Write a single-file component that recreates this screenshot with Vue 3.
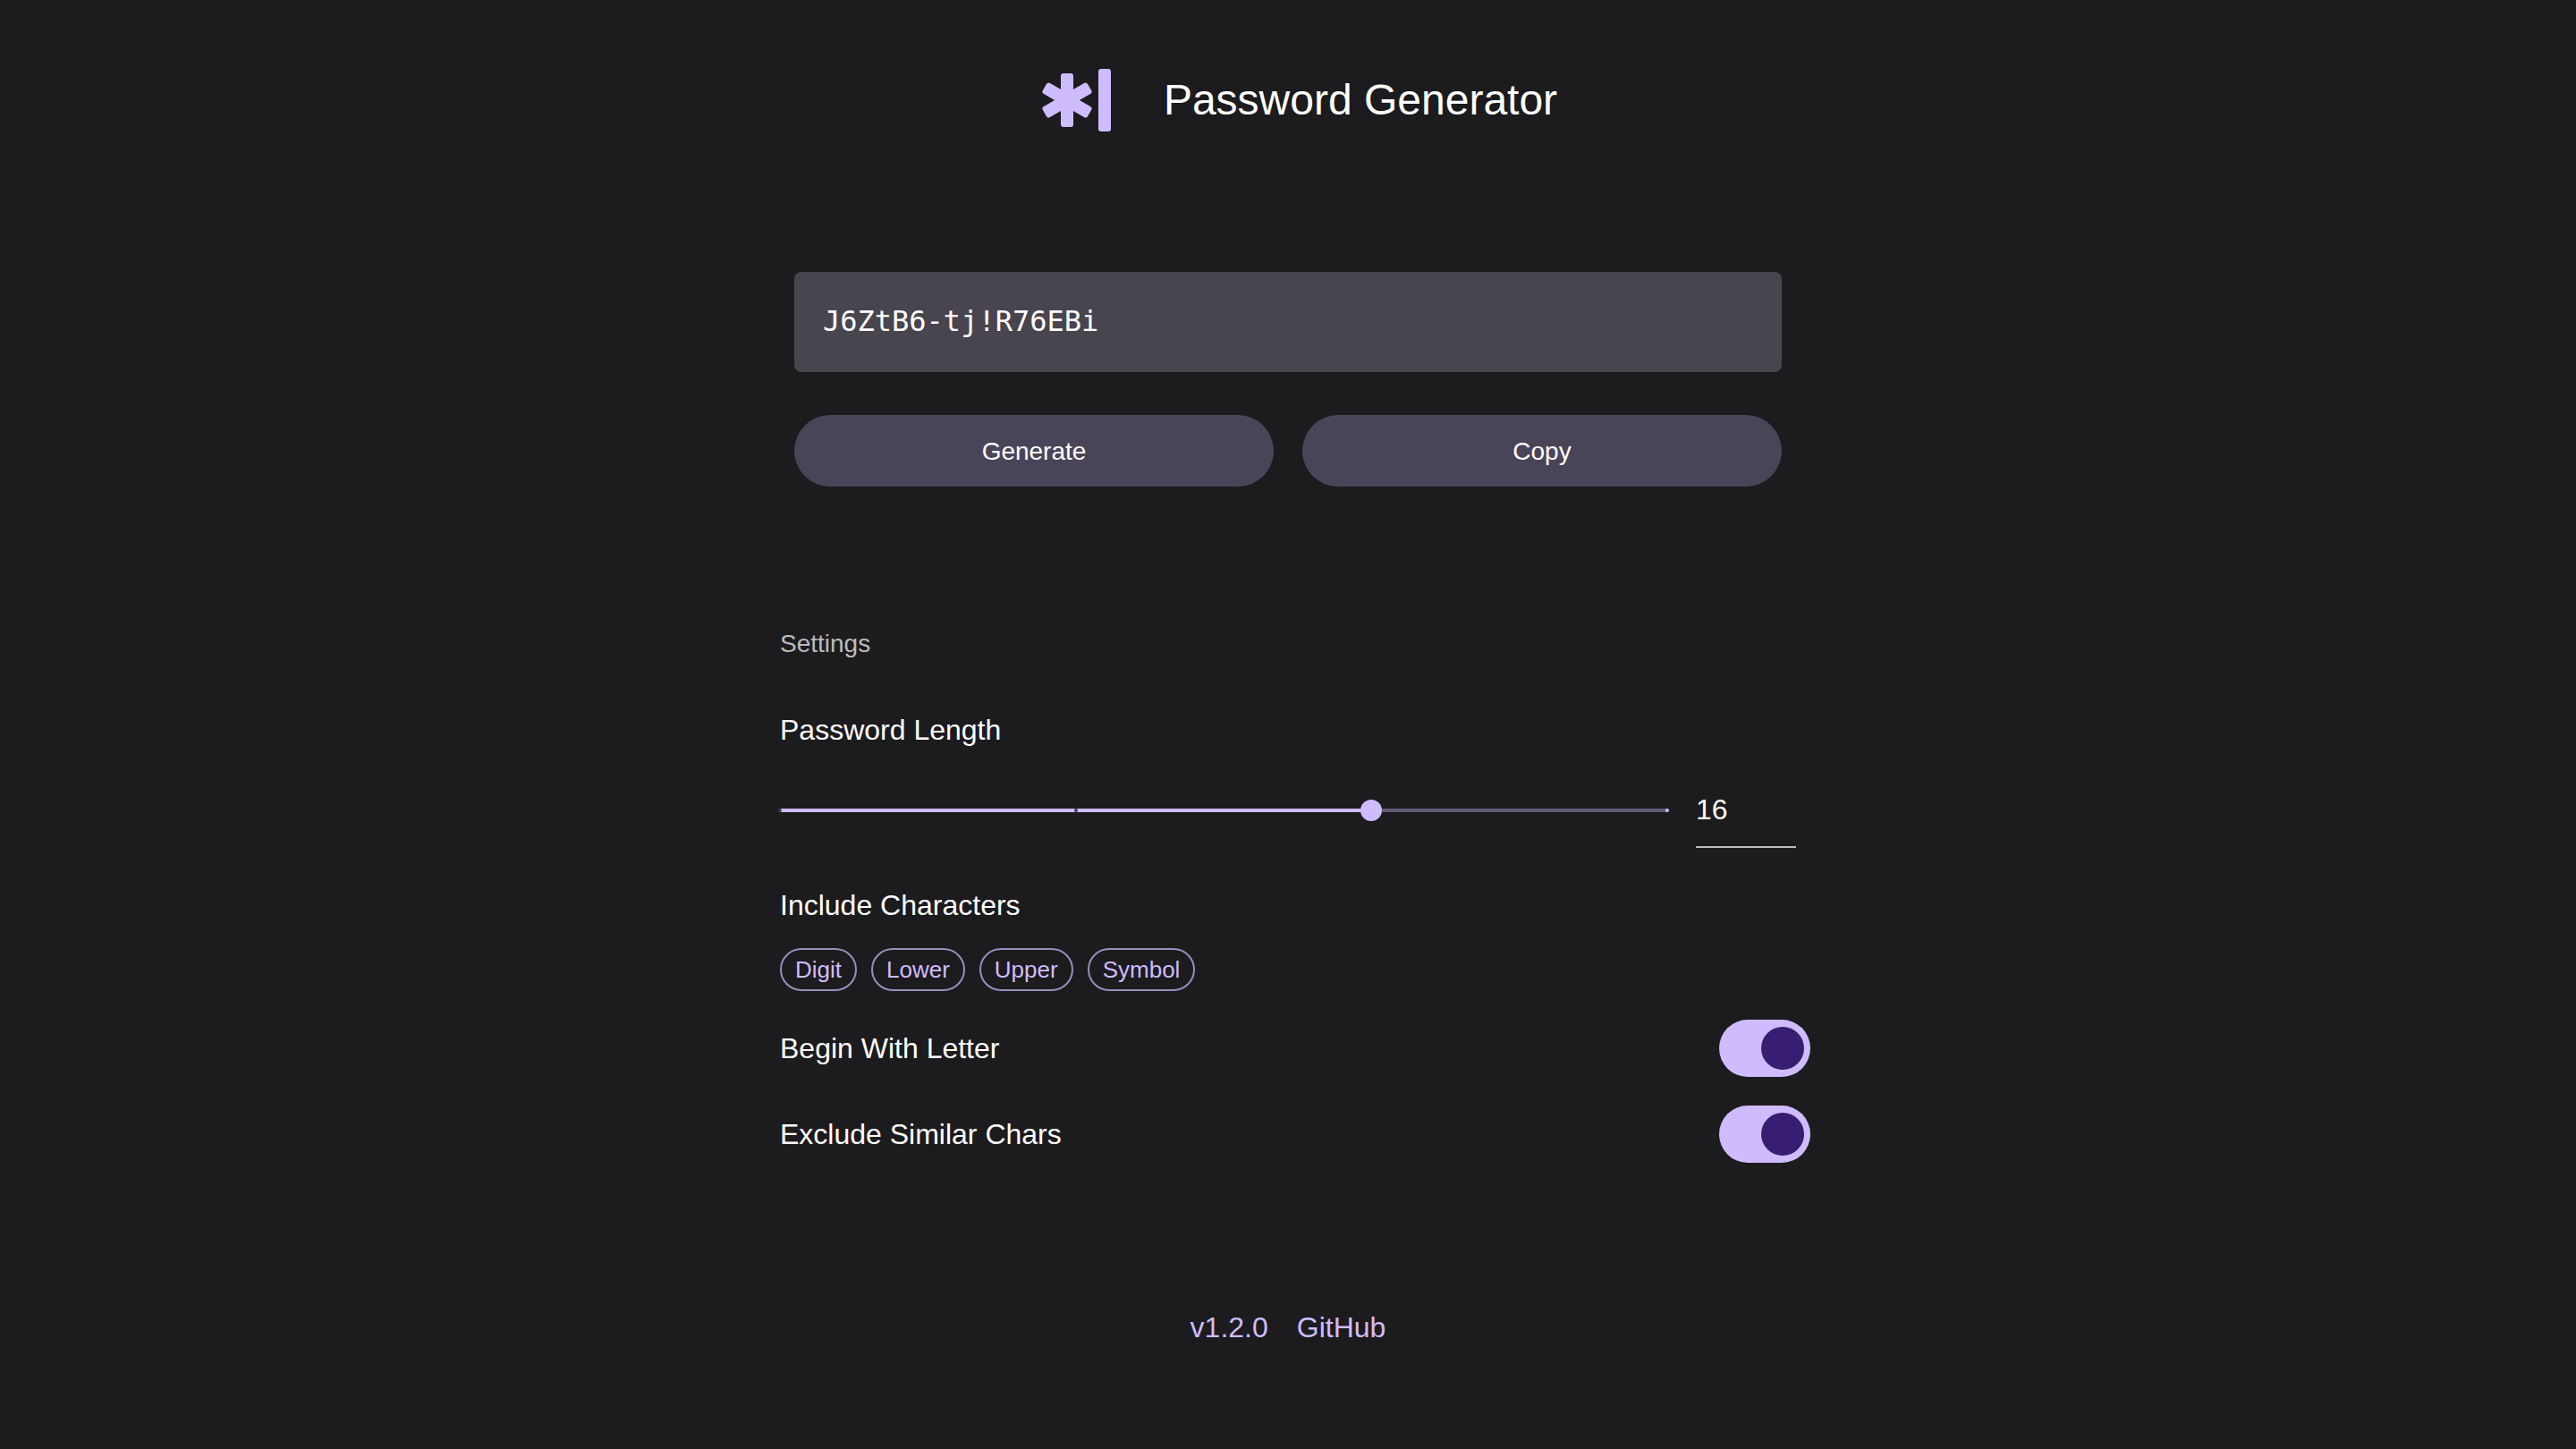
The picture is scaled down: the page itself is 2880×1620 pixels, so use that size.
<script setup>
import { computed, ref } from 'vue'

const password = ref('J6ZtB6-tj!R76EBi')
const min = 8
const max = 20
const length = ref(16)
const beginWithLetter = ref(true)
const excludeSimilar = ref(true)
const charSets = ['Digit', 'Lower', 'Upper', 'Symbol']

const percent = (value) => ((value - min) / (max - min)) * 100
const fill = computed(() => percent(length.value) + '%')
const marks = computed(() =>
  [8, 12, 16, 20].map((value) => ({
    value,
    left: percent(value) + '%',
    active: value <= length.value,
  })),
)

const pools = {
  Digit: '23456789',
  Lower: 'abcdefghijkmnpqrstuvwxyz',
  Upper: 'ABCDEFGHJKLMNPQRSTUVWXYZ',
  Symbol: '!@#$%&*-_=+?',
}
const pick = (pool) => pool[Math.floor(Math.random() * pool.length)]

function generate() {
  const all = Object.values(pools).join('')
  const letters = pools.Lower + pools.Upper
  password.value = Array.from({ length: length.value }, (_, i) =>
    pick(i === 0 && beginWithLetter.value ? letters : all),
  ).join('')
}

function copy() {
  navigator.clipboard?.writeText(password.value)
}
</script>

<template>
  <div class="page">
    <header class="header">
      <svg class="logo" viewBox="0 0 80 72" aria-hidden="true">
        <rect x="21" y="6" width="14" height="60" rx="3" />
        <rect x="21" y="7" width="14" height="58" rx="3" transform="rotate(60 28 36)" />
        <rect x="21" y="7" width="14" height="58" rx="3" transform="rotate(-60 28 36)" />
        <rect x="63" y="1" width="14" height="70" rx="3" />
      </svg>
      <h1 class="title">Password Generator</h1>
    </header>

    <main class="content">
      <section class="output" aria-label="Generated password">
        <input v-model="password" class="password" type="text" aria-label="Password" readonly />
        <div class="actions">
          <button class="button" type="button" @click="generate">Generate</button>
          <button class="button" type="button" @click="copy">Copy</button>
        </div>
      </section>

      <section class="settings" aria-labelledby="settings-title">
        <h2 id="settings-title" class="settings-title">Settings</h2>

        <label class="label" for="length-slider">Password Length</label>
        <div class="length">
          <div class="slider" :style="{ '--fill': fill }">
            <span
              v-for="mark in marks"
              :key="mark.value"
              class="mark"
              :class="{ active: mark.active }"
              :style="{ left: mark.left }"
            ></span>
            <input
              id="length-slider"
              v-model.number="length"
              class="range"
              type="range"
              :min="min"
              :max="max"
            />
          </div>
          <input
            v-model.number="length"
            class="number"
            type="number"
            aria-label="Password length value"
            :min="min"
            :max="max"
          />
        </div>

        <h3 class="label">Include Characters</h3>
        <div class="chips">
          <button v-for="name in charSets" :key="name" class="chip" type="button">{{ name }}</button>
        </div>

        <div class="row">
          <label class="label" for="begin">Begin With Letter</label>
          <input id="begin" v-model="beginWithLetter" class="switch" type="checkbox" role="switch" />
        </div>
        <div class="row">
          <label class="label" for="exclude">Exclude Similar Chars</label>
          <input id="exclude" v-model="excludeSimilar" class="switch" type="checkbox" role="switch" />
        </div>
      </section>
    </main>

    <footer class="footer">
      <a class="link" href="#releases">v1.2.0</a>
      <a class="link" href="#github">GitHub</a>
    </footer>
  </div>
</template>

<style>
body {
  background: #1c1b1e;
}
</style>

<style scoped>
.page {
  --primary: #cfbcff;
  --muted: #bbbbbc;
  box-sizing: border-box;
  min-height: 100vh;
  padding: 64px 32px;
  background: #1c1b1e;
  color: #fff;
  font-family: "Liberation Sans", Helvetica, Arial, sans-serif;
  font-size: 32px;
  line-height: 48px;
}

.page input,
.page button {
  box-sizing: border-box;
  margin: 0;
  border: 0;
  outline: 0;
  color: inherit;
  font-family: inherit;
}

.header {
  display: flex;
  align-items: center;
  justify-content: center;
  gap: 56px;
  height: 96px;
  padding-left: 26px;
}

.logo {
  width: 80px;
  height: 72px;
  fill: var(--primary);
}

.title {
  margin: 0;
  font-size: 48px;
  font-weight: 400;
  line-height: 64px;
}

.content {
  max-width: 1136px;
  margin: 0 auto;
}

.output {
  display: flex;
  flex-direction: column;
  gap: 48px;
  padding: 144px 16px 0;
}

.page .password {
  width: 100%;
  height: 112px;
  padding: 0 32px 2px;
  border-radius: 8px;
  background: #49454e;
  font-family: "DejaVu Sans Mono", monospace;
  font-size: 32px;
}

.actions {
  display: flex;
  gap: 32px;
}

.button {
  flex: 1;
  height: 80px;
  padding: 2px 32px 0;
  border-radius: 40px;
  background: #4a4458;
  font-size: 28px;
  cursor: pointer;
}

.settings {
  padding-top: 128px;
}

.settings-title {
  margin: 0;
  color: var(--muted);
  font-size: 28px;
  font-weight: 400;
  line-height: 96px;
}

.label {
  display: block;
  margin: 0;
  font-size: 32px;
  font-weight: 400;
  line-height: 96px;
}

.length {
  display: flex;
  align-items: center;
  gap: 32px;
  height: 84px;
  margin-bottom: 16px;
}

.slider {
  position: relative;
  flex: 1;
  height: 24px;
  background:
    linear-gradient(to right, var(--primary) var(--fill), #625975 var(--fill)) center / 100% 4px no-repeat;
}

.mark {
  position: absolute;
  top: 10px;
  width: 4px;
  height: 4px;
  margin-left: -2px;
  border-radius: 2px;
  background: var(--primary);
}

.mark.active {
  background: #403b4b;
}

.page .range {
  position: absolute;
  top: 0;
  left: -12px;
  width: calc(100% + 24px);
  height: 24px;
  background: transparent;
  appearance: none;
  cursor: pointer;
}

.range::-webkit-slider-thumb {
  width: 24px;
  height: 24px;
  border-radius: 50%;
  background: var(--primary);
  appearance: none;
}

.page .number {
  width: 112px;
  height: 84px;
  padding: 0;
  border-bottom: 2px solid var(--muted);
  background: transparent;
  font-size: 32px;
  appearance: textfield;
}

.number::-webkit-inner-spin-button {
  display: none;
}

.chips {
  display: flex;
  gap: 16px;
  margin-bottom: 16px;
}

.page .chip {
  height: 48px;
  padding: 0 15px;
  border: 2px solid #9a8dbc;
  border-radius: 24px;
  background: transparent;
  color: var(--primary);
  font-size: 26px;
}

.row {
  display: flex;
  align-items: center;
  justify-content: space-between;
}

.page .switch {
  display: flex;
  align-items: center;
  justify-content: flex-start;
  width: 102px;
  height: 64px;
  margin-right: -16px;
  padding: 0 7px;
  border-radius: 32px;
  background: #49454e;
  appearance: none;
  cursor: pointer;
}

.switch::before {
  width: 48px;
  height: 48px;
  border-radius: 50%;
  background: #948f99;
  content: "";
}

.page .switch:checked {
  justify-content: flex-end;
  background: var(--primary);
}

.switch:checked::before {
  background: #381e72;
}

.footer {
  display: flex;
  justify-content: center;
  gap: 32px;
  padding-top: 144px;
}

.link {
  color: var(--primary);
  text-decoration: none;
}
</style>
